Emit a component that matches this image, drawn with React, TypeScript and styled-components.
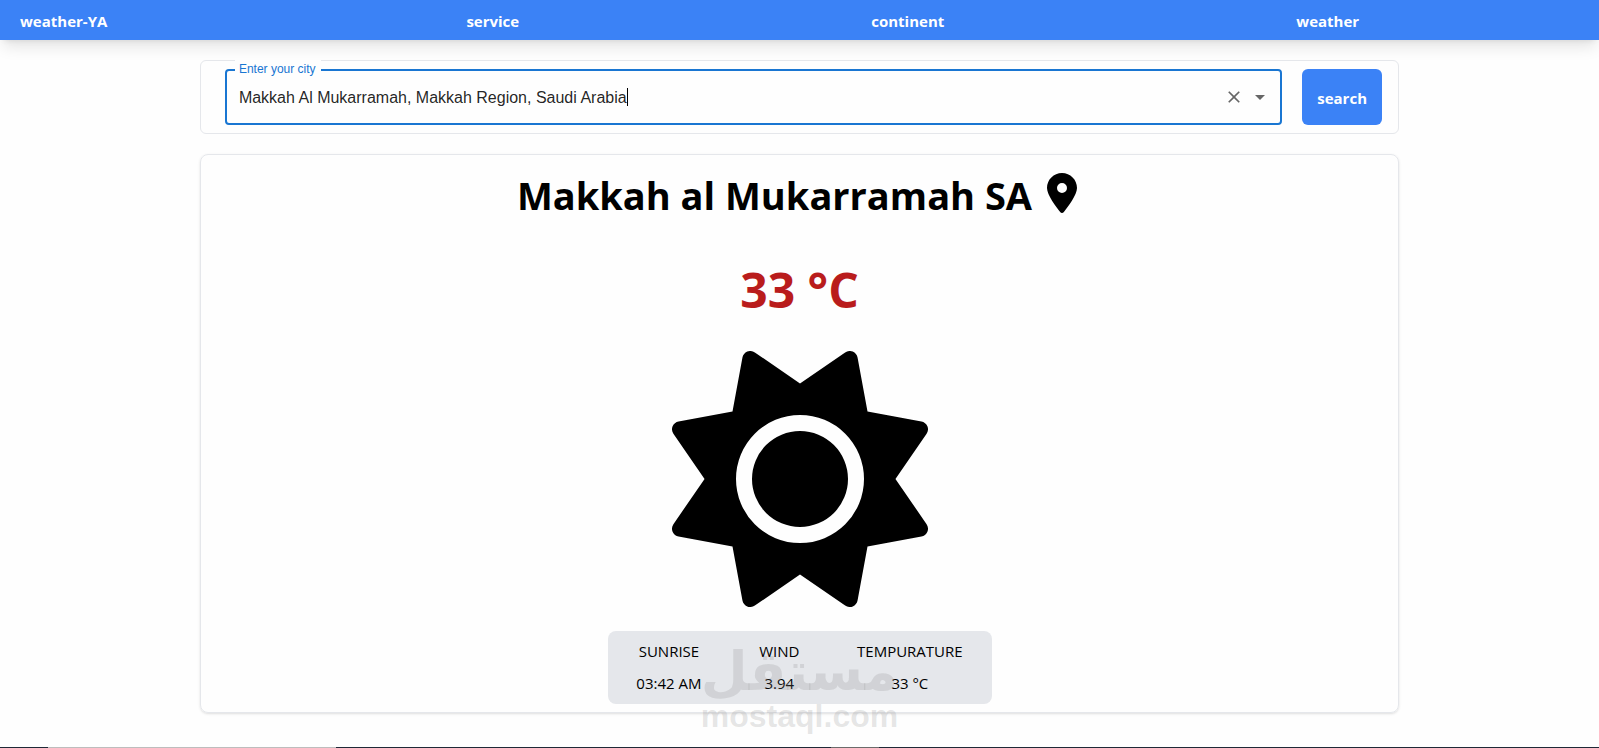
import React, { useState } from "react";
import styled, { createGlobalStyle } from "styled-components";
import { FaLocationDot, FaSun } from "react-icons/fa6";
import { MdArrowDropDown, MdClose } from "react-icons/md";

const GlobalStyle = createGlobalStyle`
  *, *::before, *::after { box-sizing: border-box; }
  body {
    margin: 0;
    background: #fefefe;
    color: #000;
    font-family: "Segoe UI", "Open Sans", "Noto Sans", sans-serif;
    font-size: 16px;
    line-height: 24px;
  }
  h1, p, ul, dl, dt, dd { margin: 0; padding: 0; }
  button { padding: 0; border: 0; cursor: pointer; font: inherit; }
`;

const Page = styled.div`
  display: flex;
  flex-direction: column;
  min-height: 100vh;
`;

const Header = styled.header`
  display: flex;
  align-items: center;
  height: 40px;
  padding: 2px 15% 0 20px;
  background: #3b82f6;
  box-shadow: 0 10px 15px -3px rgba(0, 0, 0, 0.1), 0 4px 6px -4px rgba(0, 0, 0, 0.1);
`;

const Brand = styled.div`
  flex: 0 0 calc(100% / 3);
`;

const NavList = styled.ul`
  display: flex;
  flex: 1;
  align-items: center;
  justify-content: space-between;
  list-style: none;
`;

const NavLink = styled.a`
  color: #fff;
  font-size: 15px;
  font-weight: 700;
  text-decoration: none;
`;

const Main = styled.main`
  display: flex;
  flex-direction: column;
  gap: 20px;
  width: 75%;
  margin: 20px auto;
`;

const SearchForm = styled.form`
  display: flex;
  gap: 20px;
  padding: 8px 16px 8px 24px;
  border: 1px solid #e5e7eb;
  border-radius: 6px;
`;

const Field = styled.div`
  position: relative;
  display: flex;
  flex: 1;
  align-items: center;
  height: 56px;
  padding: 0 7px 0 12px;
  border: 2px solid #1976d2;
  border-radius: 4px;
  font-family: "Liberation Sans", Arial, sans-serif;
`;

const FieldLabel = styled.label`
  position: absolute;
  top: -11px;
  left: 8px;
  padding: 0 5px 0 4px;
  background: #fefefe;
  color: #1976d2;
  font-size: 12px;
  line-height: 18px;
`;

const CityInput = styled.input`
  min-width: 1px;
  padding: 2px 0 0;
  border: 0;
  outline: 0;
  background: transparent;
  color: rgba(0, 0, 0, 0.87);
  caret-color: transparent;
  field-sizing: content;
  font: inherit;
`;

const Caret = styled.span`
  width: 1px;
  height: 18px;
  margin-right: auto;
  background: #000;
`;

const IconButton = styled.button<{ $size: number }>`
  display: flex;
  align-items: center;
  justify-content: center;
  width: 26px;
  height: 28px;
  background: transparent;
  color: #666;
  font-size: ${({ $size }) => $size}px;
`;

const SearchButton = styled.button`
  width: 80px;
  padding-top: 2px;
  border-radius: 6px;
  background: #3b82f6;
  color: #fff;
  font-size: 15px;
  font-weight: 700;
`;

const Card = styled.section`
  display: flex;
  flex-direction: column;
  align-items: center;
  padding: 16px 8px 8px;
  border: 1px solid #e5e7eb;
  border-radius: 8px;
  box-shadow: 0 1px 3px rgba(0, 0, 0, 0.1), 0 1px 2px -1px rgba(0, 0, 0, 0.1);
`;

const City = styled.h1`
  display: flex;
  align-items: flex-start;
  gap: 10px;
  font-size: 38px;
  font-weight: 700;
  line-height: 48px;
`;

const PinIcon = styled(FaLocationDot)`
  margin-top: 2px;
  font-size: 40px;
`;

const Temperature = styled.p`
  margin: 45px 0 35px;
  color: #b91c1c;
  font-size: 48px;
  font-weight: 700;
  line-height: 52px;
`;

const Details = styled.dl`
  display: flex;
  justify-content: space-around;
  width: 384px;
  max-width: 100%;
  margin-top: 24px;
  padding: 8px 0 9px;
  border-radius: 8px;
  background: #e5e7eb;
`;

const Detail = styled.div`
  display: flex;
  flex-direction: column;
  gap: 8px;
  font-size: 15px;
  text-align: center;
`;

const Watermark = styled.div`
  position: absolute;
  top: 644px;
  left: 50%;
  display: flex;
  flex-direction: column;
  align-items: center;
  transform: translateX(-50%);
  color: rgba(128, 128, 128, 0.2);
  font-weight: 700;
  pointer-events: none;
`;

const ArabicName = styled.span`
  font-family: "DejaVu Sans", sans-serif;
  font-size: 54px;
  line-height: 56px;
`;

const LatinName = styled.span`
  font-family: "Liberation Sans", Arial, sans-serif;
  font-size: 32px;
  line-height: 32px;
`;

const BottomBar = styled.footer`
  display: flex;
  height: 1px;
  margin-top: auto;
  background: #1f2937;
`;

const BarItem = styled.span<{ $start: number; $width: number; $color: string }>`
  width: ${({ $width }) => $width}%;
  margin-left: ${({ $start }) => $start}%;
  background: ${({ $color }) => $color};
`;

const links = ["service", "continent", "weather"];

const details = [
  { name: "SUNRISE", value: "03:42 AM" },
  { name: "WIND", value: "3.94" },
  { name: "TEMPURATURE", value: "33 °C" },
];

export default function App() {
  const [city, setCity] = useState("Makkah Al Mukarramah, Makkah Region, Saudi Arabia");

  return (
    <Page>
      <GlobalStyle />
      <Header>
        <Brand>
          <NavLink href="#">weather-YA</NavLink>
        </Brand>
        <NavList>
          {links.map((link) => (
            <li key={link}>
              <NavLink href="#">{link}</NavLink>
            </li>
          ))}
        </NavList>
      </Header>
      <Main>
        <SearchForm onSubmit={(event) => event.preventDefault()}>
          <Field>
            <FieldLabel htmlFor="city">Enter your city</FieldLabel>
            <CityInput id="city" value={city} onChange={(event) => setCity(event.target.value)} />
            <Caret />
            <IconButton type="button" $size={20} aria-label="Clear" onClick={() => setCity("")}>
              <MdClose />
            </IconButton>
            <IconButton type="button" $size={24} aria-label="Open">
              <MdArrowDropDown />
            </IconButton>
          </Field>
          <SearchButton type="submit">search</SearchButton>
        </SearchForm>
        <Card>
          <City>
            Makkah al Mukarramah SA
            <PinIcon />
          </City>
          <Temperature>33 °C</Temperature>
          <FaSun size={256} />
          <Details>
            {details.map(({ name, value }) => (
              <Detail key={name}>
                <dt>{name}</dt>
                <dd>{value}</dd>
              </Detail>
            ))}
          </Details>
        </Card>
      </Main>
      <Watermark>
        <ArabicName lang="ar" dir="rtl">مستقل</ArabicName>
        <LatinName>mostaql.com</LatinName>
      </Watermark>
      <BottomBar>
        <BarItem $start={3} $width={18} $color="#bdbdbd" />
        <BarItem $start={31} $width={3} $color="#6b6b6b" />
      </BottomBar>
    </Page>
  );
}
